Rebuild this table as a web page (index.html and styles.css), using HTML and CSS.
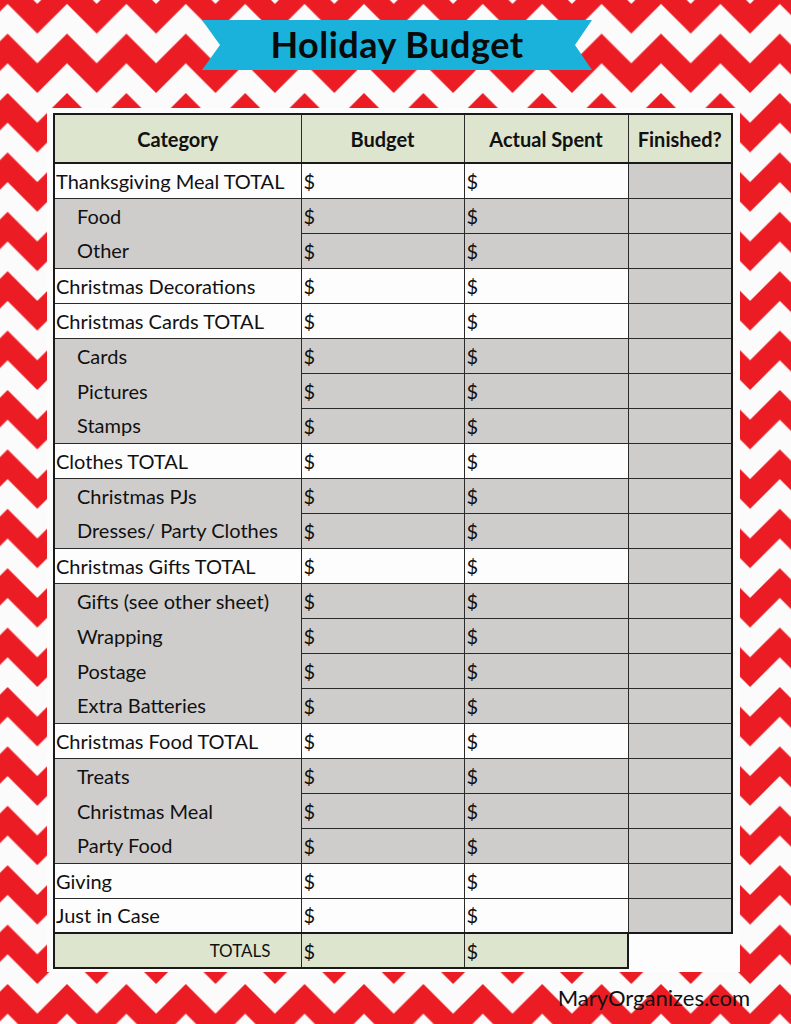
FILE: index.html
```html
<!DOCTYPE html>
<html>
<head>
<meta charset="utf-8">
<link rel="stylesheet" href="styles.css">
</head>
<body>
<div class="page">
  <svg class="bg" width="791" height="1024" viewBox="0 0 791 1024" aria-hidden="true">
    <defs>
      <pattern id="chev" width="59.4" height="59.4" patternUnits="userSpaceOnUse" x="37.3" y="33.6">
        <rect x="0" y="0" width="59.4" height="59.4" fill="#fbfbfb"/>
        <polygon points="0,29.7 29.7,0 59.4,29.7 59.4,59.4 29.7,29.7 0,59.4" fill="#ec1c24"/>
      </pattern>
    </defs>
    <rect x="0" y="0" width="791" height="1024" fill="url(#chev)"/>
  </svg>
  <div class="content">
    <div class="banner"><h1 class="title">Holiday Budget</h1></div>
    <div class="card">
      <table class="budget">
        <colgroup>
          <col class="c-cat"><col class="c-bud"><col class="c-act"><col class="c-fin">
        </colgroup>
        <thead>
          <tr class="head">
            <th>Category</th><th>Budget</th><th>Actual Spent</th><th>Finished?</th>
          </tr>
        </thead>
        <tbody>
          <tr class="main"><td class="cat">Thanksgiving Meal TOTAL</td><td class="amt">$</td><td class="amt">$</td><td class="fin"></td></tr>
          <tr class="sub"><td class="cat">Food</td><td class="amt">$</td><td class="amt">$</td><td class="fin"></td></tr>
          <tr class="sub"><td class="cat">Other</td><td class="amt">$</td><td class="amt">$</td><td class="fin"></td></tr>
          <tr class="main"><td class="cat">Christmas Decorations</td><td class="amt">$</td><td class="amt">$</td><td class="fin"></td></tr>
          <tr class="main"><td class="cat">Christmas Cards TOTAL</td><td class="amt">$</td><td class="amt">$</td><td class="fin"></td></tr>
          <tr class="sub"><td class="cat">Cards</td><td class="amt">$</td><td class="amt">$</td><td class="fin"></td></tr>
          <tr class="sub"><td class="cat">Pictures</td><td class="amt">$</td><td class="amt">$</td><td class="fin"></td></tr>
          <tr class="sub"><td class="cat">Stamps</td><td class="amt">$</td><td class="amt">$</td><td class="fin"></td></tr>
          <tr class="main"><td class="cat">Clothes TOTAL</td><td class="amt">$</td><td class="amt">$</td><td class="fin"></td></tr>
          <tr class="sub"><td class="cat">Christmas PJs</td><td class="amt">$</td><td class="amt">$</td><td class="fin"></td></tr>
          <tr class="sub"><td class="cat">Dresses/ Party Clothes</td><td class="amt">$</td><td class="amt">$</td><td class="fin"></td></tr>
          <tr class="main"><td class="cat">Christmas Gifts TOTAL</td><td class="amt">$</td><td class="amt">$</td><td class="fin"></td></tr>
          <tr class="sub"><td class="cat">Gifts (see other sheet)</td><td class="amt">$</td><td class="amt">$</td><td class="fin"></td></tr>
          <tr class="sub"><td class="cat">Wrapping</td><td class="amt">$</td><td class="amt">$</td><td class="fin"></td></tr>
          <tr class="sub"><td class="cat">Postage</td><td class="amt">$</td><td class="amt">$</td><td class="fin"></td></tr>
          <tr class="sub"><td class="cat">Extra Batteries</td><td class="amt">$</td><td class="amt">$</td><td class="fin"></td></tr>
          <tr class="main"><td class="cat">Christmas Food TOTAL</td><td class="amt">$</td><td class="amt">$</td><td class="fin"></td></tr>
          <tr class="sub"><td class="cat">Treats</td><td class="amt">$</td><td class="amt">$</td><td class="fin"></td></tr>
          <tr class="sub"><td class="cat">Christmas Meal</td><td class="amt">$</td><td class="amt">$</td><td class="fin"></td></tr>
          <tr class="sub"><td class="cat">Party Food</td><td class="amt">$</td><td class="amt">$</td><td class="fin"></td></tr>
          <tr class="main"><td class="cat">Giving</td><td class="amt">$</td><td class="amt">$</td><td class="fin"></td></tr>
          <tr class="main last"><td class="cat">Just in Case</td><td class="amt">$</td><td class="amt">$</td><td class="fin"></td></tr>
          <tr class="totals"><td class="cat">TOTALS</td><td class="amt">$</td><td class="amt">$</td><td class="blank"></td></tr>
        </tbody>
      </table>
    </div>
    <div class="footer">MaryOrganizes.com</div>
  </div>
</div>
</body>
</html>
```
FILE: styles.css
```css
html, body {
  margin: 0;
  padding: 0;
}
body {
  font-family: "Lato", "Liberation Sans", sans-serif;
  color: #111;
}
.page {
  position: relative;
  width: 791px;
  height: 1024px;
  overflow: hidden;
}
.bg {
  position: absolute;
  top: 0;
  left: 0;
  z-index: 0;
}
.content {
  position: relative;
  z-index: 1;
  padding-top: 20px;
}
.banner {
  margin-left: 202px;
  width: 390px;
  height: 50px;
  background: #1ab2da;
  clip-path: polygon(0 0, 100% 0, calc(100% - 17px) 50%, 100% 100%, 0 100%, 18px 50%);
  display: flex;
  align-items: center;
  justify-content: center;
}
.title {
  margin: 0;
  font-size: 36px;
  font-weight: 700;
  letter-spacing: 0.5px;
  line-height: 1;
  color: #0a0a0a;
  transform: translateY(-1px);
}
.card {
  margin: 38px 0 0 47px;
  width: 693px;
  height: 864px;
  box-sizing: border-box;
  padding: 5px 0 0 6px;
  background: #fdfdfd;
}
.budget {
  border-collapse: collapse;
  table-layout: fixed;
  width: 678px;
  font-size: 20px;
  line-height: 1;
}
.c-cat { width: 247px; }
.c-bud { width: 163px; }
.c-act { width: 164px; }
.c-fin { width: 104px; }

.budget th,
.budget td {
  padding: 0;
  border: 1.5px solid #2a2a2a;
  white-space: nowrap;
  overflow: hidden;
}
.head {
  height: 49px;
}
.head th {
  background: #dde5cf;
  font-weight: 700;
  text-align: center;
  border-top: 2.5px solid #1a1a1a;
  border-bottom: 2.5px solid #1a1a1a;
}
.head th:first-child { border-left: 2.5px solid #1a1a1a; }
.head th:last-child { border-right: 2.5px solid #1a1a1a; }

.budget tbody tr {
  height: 35px;
}
.budget td.cat {
  padding-left: 1px;
  border-left: 2.5px solid #1a1a1a;
}
.budget td.amt {
  padding-left: 2px;
}
.main td { background: #fdfdfd; }
.sub td { background: #cfcdcc; }
.budget .sub td.cat {
  padding-left: 22px;
  border-top: none;
  border-bottom: none;
}
.budget td.fin {
  background: #cfcdcc;
  border-right: 2.5px solid #1a1a1a;
}
.last td { border-bottom: 2.5px solid #1a1a1a; }

.totals td {
  background: #dde5cf;
  border-bottom: 2.5px solid #1a1a1a;
}
.budget .totals td.cat {
  text-align: right;
  padding-right: 30px;
  font-size: 17px;
}
.totals td.amt:nth-child(3) {
  border-right: 2.5px solid #1a1a1a;
}
.budget td.blank {
  background: transparent;
  border: none;
}
.footer {
  margin-top: 14px;
  padding-right: 41px;
  text-align: right;
  font-size: 22px;
  line-height: 24px;
  color: #111;
}
```
